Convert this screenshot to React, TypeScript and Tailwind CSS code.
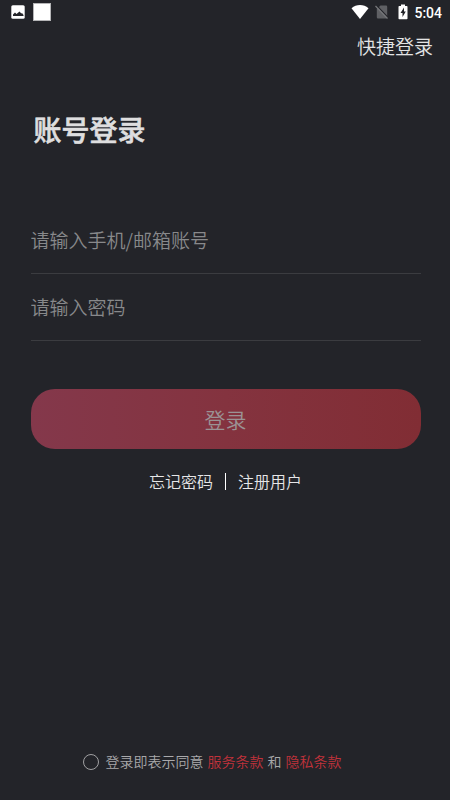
import { useState } from 'react'

const FONT = "font-['Roboto','Noto_Sans_CJK_SC',sans-serif]"

function StatusBar() {
  return (
    <div className="flex h-6 items-center justify-between pl-[9px] pr-2">
      <div className="flex items-center gap-[6px]">
        <svg width="18" height="18" viewBox="0 0 18 18">
          <rect x="2.300" y="2.300" width="13.400" height="13.400" rx="1.500" fill="#fff" />
          <path d="M4 13v-1.500l2-2 1.500 1.500L10.500 8.500l1.800 2 .7-.5 1.500 2v1z" fill="#232429" />
        </svg>
        <div className="size-[18px] border border-[#b5b5b7] bg-white" />
      </div>
      <div className="flex items-center">
        <svg width="18" height="14" viewBox="0 0 18 14" fill="#fff">
          <path d="M9 14L0.500 3.200C3 1 5.800 0 9 0s6 1 8.500 3.200z" />
        </svg>
        <svg className="ml-[5px]" width="16" height="16" viewBox="0 0 16 16">
          <path d="M6.500 1.500H12a1.200 1.200 0 0 1 1.200 1.200v10.600a1.200 1.200 0 0 1-1.200 1.200H4a1.200 1.200 0 0 1-1.200-1.200V5z" fill="#5f6064" />
          <path d="M2.500 1.500l12 12.500" stroke="#232429" strokeWidth="1.300" />
          <path d="M1.500 2l12 12.500" stroke="#77787b" strokeWidth="1.200" />
        </svg>
        <svg className="ml-[8px]" width="10" height="16" viewBox="0 0 10 16">
          <path d="M3 0.500h4V2h1.700a.8.800 0 0 1 .8.800v11.700a.8.800 0 0 1-.8.800H1.300a.8.800 0 0 1-.8-.8V2.800a.8.800 0 0 1 .8-.8H3z" fill="#fff" />
          <path d="M6 3.500L2.500 9h2v4L7.800 7.500H6z" fill="#232429" />
        </svg>
        <span className="ml-[6px] mt-px text-[14px] font-medium leading-6 text-white">5:04</span>
      </div>
    </div>
  )
}

export default function App() {
  const [account, setAccount] = useState('')
  const [password, setPassword] = useState('')
  const [agreed, setAgreed] = useState(false)

  return (
    <div className={`flex h-[800px] w-[450px] flex-col bg-[#232429] ${FONT}`}>
      <StatusBar />

      <div className="flex h-11 justify-end pr-[17px] pt-[3px]">
        <button className="text-[19px] font-[350] leading-[41px] text-[#e4e4e5]">快捷登录</button>
      </div>

      <h1 className="mt-[43px] pl-[33.500px] text-[28px] font-medium leading-[42px] text-[#dededf] [-webkit-text-stroke:0.600px_#dededf]">账号登录</h1>

      <form className="mt-[54px] flex flex-col pl-[31px] pr-[29px]">
        <input
          value={account}
          onChange={(e) => setAccount(e.target.value)}
          placeholder="请输入手机/邮箱账号"
          className="h-[67px] border-b border-[#3b3c40] bg-transparent pb-[2px] font-['Noto_Sans_CJK_SC',sans-serif] text-[19px] font-[350] text-white outline-none placeholder:text-[#88898b] -indent-[0.500px]"
        />
        <input
          type="password"
          value={password}
          onChange={(e) => setPassword(e.target.value)}
          placeholder="请输入密码"
          className="h-[67px] border-b border-[#3b3c40] bg-transparent pb-[2px] font-['Noto_Sans_CJK_SC',sans-serif] text-[19px] font-[350] text-white outline-none placeholder:text-[#88898b] -indent-[0.500px]"
        />
        <button
          type="button"
          className="mt-12 h-[60px] rounded-[24px] bg-linear-to-r from-[#84384b] via-[#84333f] to-[#812d34] pr-px pt-[5px] text-[21px] font-[350] text-[#9b9294]"
        >
          登录
        </button>
      </form>

      <div className="mt-5 flex h-[25px] items-center justify-center gap-3 pl-px text-[16px] leading-6 text-[#e6e6e7]">
        <button className="pt-[2px] font-[350]">忘记密码</button>
        <div className="h-[17px] w-px bg-white" />
        <button className="pt-[2px] font-[350]">注册用户</button>
      </div>

      <div className="mb-[27px] mt-auto flex items-center pl-[83px] text-[14px] font-[350] leading-[22px] text-[#a9a9ab]">
        <button
          aria-label="同意条款"
          onClick={() => setAgreed(!agreed)}
          className={`mr-[6.500px] size-4 rounded-full border border-[#a0a0a2] ${agreed ? 'bg-[#c1323b]' : ''}`}
        />
        <span>登录即表示同意</span>
        <a className="mx-1 text-[#c1323b]">服务条款</a>
        <span>和</span>
        <a className="ml-1 text-[#c1323b]">隐私条款</a>
      </div>
    </div>
  )
}
